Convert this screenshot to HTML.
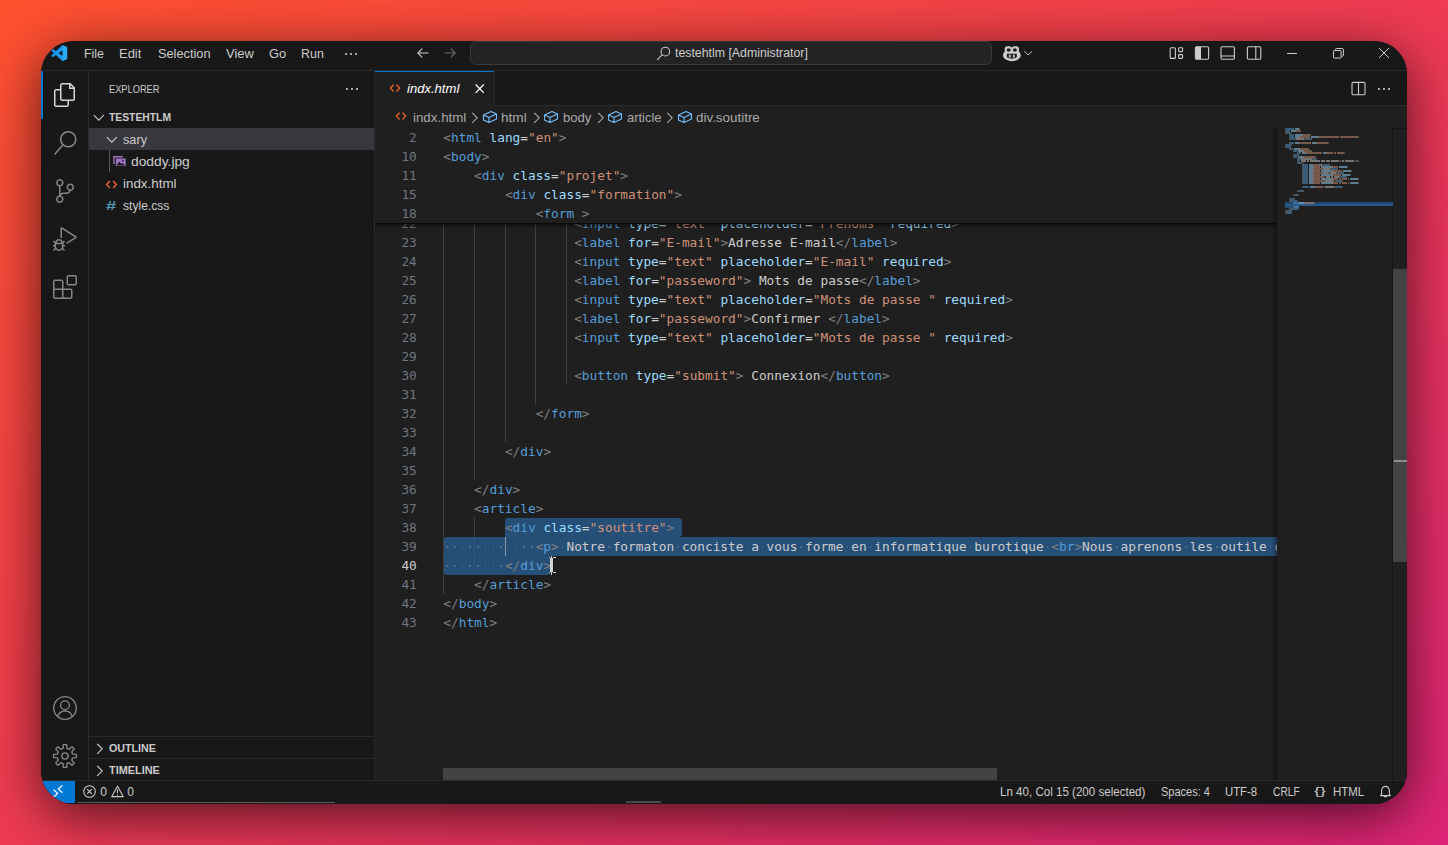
<!DOCTYPE html>
<html lang="en"><head><meta charset="utf-8"><title>indx.html - testehtlm - Visual Studio Code</title>
<style>

html,body{margin:0;padding:0;}
body{width:1448px;height:845px;overflow:hidden;position:relative;background:linear-gradient(to bottom right,#FF512F,#DD2476);font-family:"Liberation Sans",sans-serif;}
#shadow{position:absolute;left:41px;top:41px;width:1366px;height:763px;border-radius:33px;box-shadow:0 12px 54px rgba(0,0,0,0.66);}
#win{position:absolute;left:41px;top:41px;width:1366px;height:763px;border-radius:33px;overflow:hidden;background:#181818;}
#pg{position:absolute;left:-41px;top:-41px;width:1448px;height:845px;}
.b{position:absolute;}
.t{position:absolute;white-space:pre;transform-origin:0 50%;line-height:20px;height:20px;font-family:"Liberation Sans",sans-serif;}
.m{position:absolute;white-space:pre;line-height:19px;height:19px;font-family:"DejaVu Sans Mono","Liberation Mono",monospace;font-size:12.8px;letter-spacing:-0.009px;color:#cccccc;}
svg{position:absolute;overflow:visible;}
#mm i{position:absolute;height:1.2px;margin-top:0.4px;opacity:0.5;display:block}

</style></head><body>
<div id="shadow"></div>
<div id="win"><div id="pg">
<div class="b" style="left:41px;top:41px;width:1366px;height:763px;background:#181818;"></div><div class="b" style="left:41px;top:70px;width:1366px;height:1px;background:#2b2b2b;"></div><div class="b" style="left:88px;top:71px;width:1px;height:710px;background:#2b2b2b;"></div><div class="b" style="left:374px;top:71px;width:1px;height:710px;background:#2b2b2b;"></div><div class="b" style="left:375px;top:106px;width:1032px;height:675px;background:#1f1f1f;"></div><div class="b" style="left:375px;top:105px;width:1032px;height:1px;background:#2b2b2b;"></div><div class="b" style="left:41px;top:780px;width:1366px;height:1px;background:#2b2b2b;"></div><div class="b" style="left:41px;top:71px;width:2px;height:48px;background:#0078d4;"></div><div class="b" style="left:41px;top:781px;width:34px;height:22px;background:#0078d4;"></div><div class="b" style="left:41px;top:803px;width:1366px;height:1px;background:#141a1a;"></div><svg style="left:51px;top:45px" width="16.2" height="16.2" viewBox="0 0 100 100" >
<path d="M71 0 L74 31 L12 76 L1 66 Z" fill="#1b98ee"/>
<path d="M71 100 L74 69 L12 24 L1 34 Z" fill="#1b98ee"/>
<path d="M71 0 L100 13 V87 L71 100 Z" fill="#2bacfb"/>
</svg><svg style="left:343px;top:45.5px" width="16" height="16" viewBox="0 0 16 16" fill="#cccccc"><circle cx="3" cy="8" r="1.05"/><circle cx="8" cy="8" r="1.05"/><circle cx="13" cy="8" r="1.05"/></svg><svg style="left:415px;top:44.8px" width="16" height="16" viewBox="0 0 16 16" stroke="#cccccc"><path d="M13.5 8 H3 M7.2 3.6 L2.8 8 L7.2 12.4" fill="none" stroke-width="1.1" stroke-linecap="butt" stroke-linejoin="miter"/></svg><svg style="left:441.5px;top:44.8px" width="16" height="16" viewBox="0 0 16 16" stroke="#6b6b6b"><path d="M2.5 8 H13 M8.8 3.6 L13.2 8 L8.8 12.4" fill="none" stroke-width="1.1"/></svg><div class="b" style="left:470px;top:41px;width:520px;height:22px;background:#232323;border:1px solid #3a3a3a;border-radius:6px;box-sizing:content-box"></div><svg style="left:656px;top:45.5px" width="15" height="15" viewBox="0 0 16 16" stroke="#cccccc"><circle cx="10" cy="6" r="4.6" fill="none" stroke-width="1.15"/><path d="M6.7 9.3 L1.2 14.8" fill="none" stroke-width="1.15"/></svg><svg style="left:1003.2px;top:45.5px" width="17.7" height="15.3" viewBox="0 0 17.7 15.3" >
<path d="M1.9 5.6 C0.6 6.7 0 8 0 9.6 C0 12.2 3.6 15.2 8.85 15.2 C14.1 15.2 17.7 12.2 17.7 9.6 C17.7 8 17.1 6.7 15.8 5.6 Z" fill="#cccccc"/>
<rect x="1.7" y="0.2" width="7.3" height="7" rx="2.7" fill="#cccccc"/>
<rect x="8.7" y="0.2" width="7.3" height="7" rx="2.7" fill="#cccccc"/>
<rect x="3.9" y="2.5" width="3.6" height="3" rx="1.1" fill="#181818"/>
<rect x="10.1" y="2.5" width="3.6" height="3" rx="1.1" fill="#181818"/>
<path d="M3.9 7.8 H13.8 V10.4 C13.8 11.8 11.6 12.6 8.85 12.6 C6.1 12.600 3.9 11.800 3.900 10.400 Z" fill="#181818"/>
<rect x="5.9" y="8.600" width="1.8" height="3" fill="#cccccc"/>
<rect x="9.9" y="8.600" width="1.8" height="3" fill="#cccccc"/>
</svg><svg style="left:1024px;top:49px" width="8.4" height="8" viewBox="0 0 8.4 8" stroke="#cccccc"><path d="M0.3 2.1 L4.2 6 L8.1 2.1" fill="none" stroke-width="1"/></svg><svg style="left:1169px;top:45px" width="16" height="16" viewBox="0 0 16 16" stroke="#cccccc" stroke-width="1.1"><rect x="1.2" y="2.8" width="5.2" height="10.6" rx="1" fill="none"/><rect x="9.6" y="2.8" width="4" height="3.8" rx="0.8" fill="none"/><rect x="9.6" y="9.6" width="4" height="3.8" rx="0.8" fill="none"/></svg><svg style="left:1194px;top:45px" width="16" height="16" viewBox="0 0 16 16" stroke="#cccccc" stroke-width="1.1"><rect x="1.4" y="1.700" width="13.2" height="12.6" rx="1.4" fill="none"/><path d="M1.4 2.700 Q1.400 1.700 2.800 1.700 H7 V14.3 H2.800 Q1.400 14.300 1.400 13.300 Z" fill="#cccccc" stroke="none"/></svg><svg style="left:1220px;top:45px" width="16" height="16" viewBox="0 0 16 16" stroke="#cccccc" stroke-width="1.1"><rect x="1" y="1.700" width="13.400" height="12.600" rx="1.400" fill="none"/><path d="M1 11 H14.400" fill="none"/></svg><svg style="left:1246px;top:45px" width="16" height="16" viewBox="0 0 16 16" stroke="#cccccc" stroke-width="1.1"><rect x="1.4" y="1.700" width="13.400" height="12.600" rx="1.400" fill="none"/><path d="M9.800 1.700 V14.300" fill="none"/></svg><svg style="left:1287px;top:48px" width="10" height="10" viewBox="0 0 10 10" stroke="#cccccc" stroke-width="1"><path d="M0 5.5 H10" fill="none"/></svg><svg style="left:1333px;top:48px" width="11" height="11" viewBox="0 0 11 11" stroke="#cccccc" stroke-width="1"><rect x="0.5" y="2.5" width="7.6" height="7.6" rx="0.7" fill="none"/><path d="M2.6 2.4 V1.4 Q2.6 0.5 3.5 0.5 H9.2 Q10.4 0.5 10.4 1.7 V7.2 Q10.4 8.2 9.4 8.2 H8.3" fill="none"/></svg><svg style="left:1379px;top:48px" width="10" height="10" viewBox="0 0 10 10" stroke="#cccccc" stroke-width="1"><path d="M0 0 L10 10 M10 0 L0 10" fill="none"/></svg><div class="b" style="left:375px;top:71px;width:120px;height:35px;background:#1f1f1f;"></div><div class="b" style="left:375px;top:71px;width:120px;height:1px;background:#0078d4;"></div><div class="b" style="left:494px;top:71px;width:1px;height:34px;background:#2b2b2b;"></div><svg style="left:389.2px;top:82.8px" width="12.1" height="10.23" viewBox="0 0 13 11" ><path d="M4.9 1.9 L1.6 5.5 L4.9 9.1 M8.1 1.9 L11.4 5.5 L8.1 9.1" fill="none" stroke="#e5622d" stroke-width="1.5"/></svg><svg style="left:475.3px;top:84.3px" width="9.4" height="9.4" viewBox="0 0 10 10" stroke="#ffffff" stroke-width="1.35"><path d="M0.6 0.6 L9.4 9.4 M9.4 0.6 L0.6 9.4" fill="none"/></svg><svg style="left:1351px;top:81px" width="15" height="15" viewBox="0 0 15 15" stroke="#cccccc" stroke-width="1.1"><rect x="1" y="1.4" width="13" height="12.4" rx="1.4" fill="none"/><path d="M7.5 1.4 V13.8" fill="none"/></svg><svg style="left:1376px;top:81px" width="16" height="16" viewBox="0 0 16 16" fill="#cccccc"><circle cx="3" cy="8" r="1.05"/><circle cx="8" cy="8" r="1.05"/><circle cx="13" cy="8" r="1.05"/></svg><svg style="left:395.1px;top:110.7px" width="12.1" height="10.23" viewBox="0 0 13 11" ><path d="M4.9 1.9 L1.6 5.5 L4.9 9.1 M8.1 1.9 L11.4 5.5 L8.1 9.1" fill="none" stroke="#e5622d" stroke-width="1.5"/></svg><svg style="left:471px;top:111.5px" width="8" height="12" viewBox="0 0 8 12" stroke="#a9a9a9"><path d="M1.2 0.8 L6.2 5.8 L1.2 10.8" fill="none" stroke-width="1.1"/></svg><svg style="left:481.6px;top:109.3px" width="16" height="16" viewBox="0 0 16 16" ><path d="M9 2.5 L14.5 5.1 V10 L7 13.6 L1.500 11 V6 Z M1.500 6 L7 8.5 L14.500 5.100 M7 8.500 V13.600" fill="none" stroke="#75beff" stroke-width="1.1" stroke-linejoin="round"/></svg><svg style="left:532.6px;top:111.5px" width="8" height="12" viewBox="0 0 8 12" stroke="#a9a9a9"><path d="M1.2 0.8 L6.2 5.8 L1.2 10.8" fill="none" stroke-width="1.1"/></svg><svg style="left:543.1px;top:109.3px" width="16" height="16" viewBox="0 0 16 16" ><path d="M9 2.5 L14.5 5.1 V10 L7 13.6 L1.500 11 V6 Z M1.500 6 L7 8.5 L14.500 5.100 M7 8.500 V13.600" fill="none" stroke="#75beff" stroke-width="1.1" stroke-linejoin="round"/></svg><svg style="left:596.6px;top:111.5px" width="8" height="12" viewBox="0 0 8 12" stroke="#a9a9a9"><path d="M1.2 0.8 L6.2 5.8 L1.2 10.8" fill="none" stroke-width="1.1"/></svg><svg style="left:606.9px;top:109.3px" width="16" height="16" viewBox="0 0 16 16" ><path d="M9 2.5 L14.5 5.1 V10 L7 13.6 L1.500 11 V6 Z M1.500 6 L7 8.5 L14.500 5.100 M7 8.500 V13.600" fill="none" stroke="#75beff" stroke-width="1.1" stroke-linejoin="round"/></svg><svg style="left:666.4px;top:111.5px" width="8" height="12" viewBox="0 0 8 12" stroke="#a9a9a9"><path d="M1.2 0.8 L6.2 5.8 L1.2 10.8" fill="none" stroke-width="1.1"/></svg><svg style="left:676.5px;top:109.3px" width="16" height="16" viewBox="0 0 16 16" ><path d="M9 2.5 L14.5 5.1 V10 L7 13.6 L1.500 11 V6 Z M1.500 6 L7 8.5 L14.500 5.100 M7 8.500 V13.600" fill="none" stroke="#75beff" stroke-width="1.1" stroke-linejoin="round"/></svg><svg style="left:53px;top:83px" width="24" height="24" viewBox="0 0 24 24" fill="#d7d7d7"><path d="M17.5 0h-9L7 1.5V6H2.500L1 7.500v15.070L2.500 24h12.070L16 22.570V18h4.700l1.300-1.430V4.500L17.500 0zm0 2.120l2.380 2.380H17.500V2.120zm-3 20.380h-12v-15H7v9.070L8.500 18h6v4.500zm6-6h-12v-15H16V6h4.500v10.500z"/></svg><svg style="left:53px;top:131px" width="24" height="24" viewBox="0 0 24 24" fill="#868686"><path d="M15.250 0a8.250 8.250 0 0 0-6.180 13.720L1 22.880l1.120 1 8.050-9.120A8.251 8.251 0 1 0 15.250.010V0zm0 15a6.750 6.750 0 1 1 0-13.500 6.750 6.750 0 0 1 0 13.500z"/></svg><svg style="left:53px;top:179px" width="24" height="24" viewBox="0 0 24 24" fill="#868686"><path d="M21.007 8.222A3.738 3.738 0 0 0 15.045 5.200a3.737 3.737 0 0 0 1.156 6.583 2.988 2.988 0 0 1-2.668 1.670h-2.990a4.456 4.456 0 0 0-2.989 1.165V7.400a3.737 3.737 0 1 0-1.494 0v9.117a3.776 3.776 0 1 0 1.816.099 2.990 2.990 0 0 1 2.668-1.667h2.990a4.484 4.484 0 0 0 4.223-3.039 3.736 3.736 0 0 0 3.250-3.687zM4.565 3.738a2.242 2.242 0 1 1 4.484 0 2.242 2.242 0 0 1-4.484 0zm4.484 16.441a2.242 2.242 0 1 1-4.484 0 2.242 2.242 0 0 1 4.484 0zm8.221-9.715a2.242 2.242 0 1 1 0-4.485 2.242 2.242 0 0 1 0 4.485z"/></svg><svg style="left:53px;top:227px" width="24" height="24" viewBox="0 0 24 24" fill="#868686"><path d="M10.940 13.500l-1.320 1.320a3.730 3.730 0 0 0-7.240 0L1.060 13.500 0 14.560l1.720 1.720-.220.220V18H0v1.500h1.500v.080c.077.489.214.966.410 1.420L0 22.940 1.060 24l1.650-1.650A4.308 4.308 0 0 0 6 24a4.310 4.310 0 0 0 3.290-1.650L10.940 24 12 22.940 10.090 21c.198-.464.336-.951.410-1.450v-.100H12V18h-1.500v-1.500l-.220-.220L12 14.560l-1.060-1.060zM6 13.500a2.250 2.250 0 0 1 2.250 2.250h-4.500A2.250 2.250 0 0 1 6 13.500zm3 6a3.330 3.330 0 0 1-3 3 3.330 3.330 0 0 1-3-3v-2.250h6v2.250zm14.760-9.900v1.260L13.500 17.370V15.600l8.500-5.370L9 2v9.460a5.070 5.070 0 0 0-1.500-.720V.630L8.640 0l15.120 9.600z"/></svg><svg style="left:53px;top:275px" width="24" height="24" viewBox="0 0 24 24" fill="#868686"><path d="M13.500 1.500L15 0h7.500L24 1.500V9l-1.500 1.500H15L13.500 9V1.500zm1.500 0V9h7.500V1.500H15zM0 15V6l1.500-1.500H9L10.500 6v7.500H18l1.500 1.500v7.500L18 24H1.500L0 22.500V15zm9-1.500V6H1.500v7.500H9zM9 15H1.500v7.500H9V15zm1.500 7.500H18V15h-7.500v7.500z"/></svg><svg style="left:53px;top:696px" width="24" height="24" viewBox="0 0 24 24" stroke="#868686" stroke-width="1.3"><circle cx="12" cy="12" r="11.3" fill="none"/><circle cx="12" cy="9.3" r="4.4" fill="none"/><path d="M4.9 20.6 C5.8 16.9 8.5 15 12 15 C15.5 15 18.2 16.9 19.1 20.6" fill="none"/></svg><svg style="left:53px;top:744px" width="24" height="24" viewBox="0 0 24 24" stroke="#868686" stroke-width="1.4"><g transform="rotate(0 12 12)"><path d="M23.39 10.38 L23.39 13.62 L19.68 13.84 L18.74 16.13 L21.20 18.90 L18.90 21.20 L16.13 18.74 L13.84 19.68 L13.62 23.39 L10.38 23.39 L10.16 19.68 L7.87 18.74 L5.10 21.20 L2.80 18.90 L5.26 16.13 L4.32 13.84 L0.61 13.62 L0.61 10.38 L4.32 10.16 L5.26 7.87 L2.80 5.10 L5.10 2.80 L7.87 5.26 L10.16 4.32 L10.38 0.61 L13.62 0.61 L13.84 4.32 L16.13 5.26 L18.90 2.80 L21.20 5.10 L18.74 7.87 L19.68 10.16 Z" fill="none" stroke-linejoin="round"/><circle cx="12" cy="12" r="3.1" fill="none"/></g></svg><svg style="left:344px;top:81px" width="16" height="16" viewBox="0 0 16 16" fill="#cccccc"><circle cx="3" cy="8" r="1.05"/><circle cx="8" cy="8" r="1.05"/><circle cx="13" cy="8" r="1.05"/></svg><svg style="left:93px;top:113.5px" width="12" height="8" viewBox="0 0 12 8" stroke="#cccccc"><path d="M0.8 1.2 L5.8 6.2 L10.8 1.2" fill="none" stroke-width="1.1"/></svg><div class="b" style="left:89px;top:128px;width:285px;height:22px;background:#37373d;"></div><svg style="left:106px;top:135.5px" width="12" height="8" viewBox="0 0 12 8" stroke="#cccccc"><path d="M0.8 1.2 L5.8 6.2 L10.8 1.2" fill="none" stroke-width="1.1"/></svg><div class="b" style="left:109px;top:150px;width:1px;height:22px;background:#585858;"></div><svg style="left:112.6px;top:155.7px" width="13.2" height="10.4" viewBox="0 0 14 11" >
<path d="M1 8.4 V0.8 H10.4" fill="none" stroke="#a074c4" stroke-width="1.5"/>
<rect x="3" y="2.6" width="10.4" height="8" fill="#a074c4"/>
<path d="M3.6 10 L6.6 6.2 L8.8 8.6 L10 7.4 L12.8 10 Z" fill="#181818"/>
<circle cx="10.6" cy="4.8" r="0.9" fill="#181818"/>
</svg><svg style="left:105px;top:178.6px" width="13" height="11" viewBox="0 0 13 11" ><path d="M4.9 1.9 L1.6 5.5 L4.9 9.1 M8.1 1.9 L11.4 5.5 L8.1 9.1" fill="none" stroke="#e5622d" stroke-width="1.5"/></svg><div class="b" style="left:89px;top:736px;width:285px;height:1px;background:#2b2b2b;"></div><div class="b" style="left:89px;top:758px;width:285px;height:1px;background:#2b2b2b;"></div><svg style="left:95.8px;top:742.5px" width="8" height="12" viewBox="0 0 8 12" stroke="#cccccc"><path d="M1.2 0.8 L6.2 5.8 L1.2 10.8" fill="none" stroke-width="1.1"/></svg><svg style="left:95.8px;top:764.5px" width="8" height="12" viewBox="0 0 8 12" stroke="#cccccc"><path d="M1.2 0.8 L6.2 5.8 L1.2 10.8" fill="none" stroke-width="1.1"/></svg><svg style="left:53.2px;top:785px" width="10" height="12.4" viewBox="0 0 10 12.4" ><path d="M0.6 4.7 L4.6 8.4 L0.6 12.1 M9.4 0.4 L5.4 4.1 L9.4 7.8" fill="none" stroke="#ffffff" stroke-width="1.25"/></svg><svg style="left:83px;top:785px" width="13" height="13" viewBox="0 0 13 13" stroke="#cccccc" stroke-width="1.1"><circle cx="6.5" cy="6.5" r="5.8" fill="none"/><path d="M4.2 4.2 L8.8 8.8 M8.8 4.2 L4.2 8.8" fill="none"/></svg><svg style="left:110.5px;top:785px" width="13" height="13" viewBox="0 0 13 13" stroke="#cccccc" stroke-width="1.1"><path d="M6.5 1.2 L12.2 11.6 H0.8 Z" fill="none" stroke-linejoin="round"/><path d="M6.5 4.6 V8.2" fill="none"/><circle cx="6.5" cy="9.9" r="0.6" fill="#cccccc" stroke="none"/></svg><svg style="left:1379px;top:785px" width="13" height="14" viewBox="0 0 13 14" stroke="#cccccc" stroke-width="1.1"><path d="M1.6 10.6 H11.4 L10.4 9.2 V6 C10.4 3.200 8.800 1.400 6.500 1.400 C4.200 1.400 2.600 3.200 2.600 6 V9.200 Z" fill="none" stroke-linejoin="round"/><path d="M5.2 11 C5.2 12.200 7.800 12.200 7.800 11" fill="none"/></svg><div class="b" style="left:77px;top:802px;width:258px;height:1.4px;background:#5c5c5c;"></div><div class="b" style="left:626px;top:801.4px;width:35px;height:2px;background:#4a4a4a;"></div><div class="b" style="left:443px;top:214px;width:1px;height:380px;background:#404040;"></div><div class="b" style="left:474px;top:214px;width:1px;height:266px;background:#404040;"></div><div class="b" style="left:505px;top:214px;width:1px;height:228px;background:#404040;"></div><div class="b" style="left:535px;top:214px;width:1px;height:190px;background:#404040;"></div><div class="b" style="left:566px;top:214px;width:1px;height:171px;background:#404040;"></div><div class="b" style="left:474px;top:518px;width:1px;height:57px;background:#404040;"></div><div class="b" style="left:505px;top:518px;width:177px;height:19px;background:#264f78;border-radius:3px 3px 3px 0"></div><div class="b" style="left:444px;top:537px;width:833px;height:19px;background:#264f78;border-radius:3px 0 0 0"></div><div class="b" style="left:444px;top:556px;width:106.6px;height:19px;background:#264f78;border-radius:0 0 3px 3px"></div><div class="b" style="left:474px;top:518px;width:1px;height:57px;background:#38536f;"></div><div class="b" style="left:474px;top:518px;width:1px;height:19px;background:#404040;"></div><div class="b" style="left:505px;top:537px;width:1px;height:19px;background:#8a97a6;"></div><div class="b" style="left:538.76px;top:527px;width:1.5px;height:1.5px;background:#4b6a8c"></div><div class="b" style="left:446.40px;top:546px;width:1.5px;height:1.5px;background:#4b6a8c"></div><div class="b" style="left:454.10px;top:546px;width:1.5px;height:1.5px;background:#4b6a8c"></div><div class="b" style="left:461.79px;top:546px;width:1.5px;height:1.5px;background:#4b6a8c"></div><div class="b" style="left:469.49px;top:546px;width:1.5px;height:1.5px;background:#4b6a8c"></div><div class="b" style="left:477.19px;top:546px;width:1.5px;height:1.5px;background:#4b6a8c"></div><div class="b" style="left:484.88px;top:546px;width:1.5px;height:1.5px;background:#4b6a8c"></div><div class="b" style="left:492.58px;top:546px;width:1.5px;height:1.5px;background:#4b6a8c"></div><div class="b" style="left:500.28px;top:546px;width:1.5px;height:1.5px;background:#4b6a8c"></div><div class="b" style="left:507.97px;top:546px;width:1.5px;height:1.5px;background:#4b6a8c"></div><div class="b" style="left:515.67px;top:546px;width:1.5px;height:1.5px;background:#4b6a8c"></div><div class="b" style="left:523.37px;top:546px;width:1.5px;height:1.5px;background:#4b6a8c"></div><div class="b" style="left:531.07px;top:546px;width:1.5px;height:1.5px;background:#4b6a8c"></div><div class="b" style="left:561.85px;top:546px;width:1.5px;height:1.5px;background:#4b6a8c"></div><div class="b" style="left:608.04px;top:546px;width:1.5px;height:1.5px;background:#4b6a8c"></div><div class="b" style="left:677.31px;top:546px;width:1.5px;height:1.5px;background:#4b6a8c"></div><div class="b" style="left:746.58px;top:546px;width:1.5px;height:1.5px;background:#4b6a8c"></div><div class="b" style="left:761.98px;top:546px;width:1.5px;height:1.5px;background:#4b6a8c"></div><div class="b" style="left:800.46px;top:546px;width:1.5px;height:1.5px;background:#4b6a8c"></div><div class="b" style="left:846.64px;top:546px;width:1.5px;height:1.5px;background:#4b6a8c"></div><div class="b" style="left:869.73px;top:546px;width:1.5px;height:1.5px;background:#4b6a8c"></div><div class="b" style="left:969.79px;top:546px;width:1.5px;height:1.5px;background:#4b6a8c"></div><div class="b" style="left:1046.76px;top:546px;width:1.5px;height:1.5px;background:#4b6a8c"></div><div class="b" style="left:1116.04px;top:546px;width:1.5px;height:1.5px;background:#4b6a8c"></div><div class="b" style="left:1185.31px;top:546px;width:1.5px;height:1.5px;background:#4b6a8c"></div><div class="b" style="left:1216.10px;top:546px;width:1.5px;height:1.5px;background:#4b6a8c"></div><div class="b" style="left:1269.98px;top:546px;width:1.5px;height:1.5px;background:#4b6a8c"></div><div class="b" style="left:446.40px;top:565px;width:1.5px;height:1.5px;background:#4b6a8c"></div><div class="b" style="left:454.10px;top:565px;width:1.5px;height:1.5px;background:#4b6a8c"></div><div class="b" style="left:461.79px;top:565px;width:1.5px;height:1.5px;background:#4b6a8c"></div><div class="b" style="left:469.49px;top:565px;width:1.5px;height:1.5px;background:#4b6a8c"></div><div class="b" style="left:477.19px;top:565px;width:1.5px;height:1.5px;background:#4b6a8c"></div><div class="b" style="left:484.88px;top:565px;width:1.5px;height:1.5px;background:#4b6a8c"></div><div class="b" style="left:492.58px;top:565px;width:1.5px;height:1.5px;background:#4b6a8c"></div><div class="b" style="left:500.28px;top:565px;width:1.5px;height:1.5px;background:#4b6a8c"></div><span class="m" style="left:376px;top:214px;width:40.8px;text-align:right;color:#6e7681">22</span><span class="m" style="left:574.15px;top:214px"><span style="color:#808080">&lt;</span><span style="color:#569cd6">input</span><span style="color:#cccccc"> </span><span style="color:#9cdcfe">type</span><span style="color:#cccccc">=</span><span style="color:#ce9178">"text"</span><span style="color:#cccccc"> </span><span style="color:#9cdcfe">placeholder</span><span style="color:#cccccc">=</span><span style="color:#ce9178">"Prenoms"</span><span style="color:#cccccc"> </span><span style="color:#9cdcfe">required</span><span style="color:#808080">&gt;</span></span><span class="m" style="left:376px;top:233px;width:40.8px;text-align:right;color:#6e7681">23</span><span class="m" style="left:574.15px;top:233px"><span style="color:#808080">&lt;</span><span style="color:#569cd6">label</span><span style="color:#cccccc"> </span><span style="color:#9cdcfe">for</span><span style="color:#cccccc">=</span><span style="color:#ce9178">"E-mail"</span><span style="color:#808080">&gt;</span><span style="color:#cccccc">Adresse E-mail</span><span style="color:#808080">&lt;/</span><span style="color:#569cd6">label</span><span style="color:#808080">&gt;</span></span><span class="m" style="left:376px;top:252px;width:40.8px;text-align:right;color:#6e7681">24</span><span class="m" style="left:574.15px;top:252px"><span style="color:#808080">&lt;</span><span style="color:#569cd6">input</span><span style="color:#cccccc"> </span><span style="color:#9cdcfe">type</span><span style="color:#cccccc">=</span><span style="color:#ce9178">"text"</span><span style="color:#cccccc"> </span><span style="color:#9cdcfe">placeholder</span><span style="color:#cccccc">=</span><span style="color:#ce9178">"E-mail"</span><span style="color:#cccccc"> </span><span style="color:#9cdcfe">required</span><span style="color:#808080">&gt;</span></span><span class="m" style="left:376px;top:271px;width:40.8px;text-align:right;color:#6e7681">25</span><span class="m" style="left:574.15px;top:271px"><span style="color:#808080">&lt;</span><span style="color:#569cd6">label</span><span style="color:#cccccc"> </span><span style="color:#9cdcfe">for</span><span style="color:#cccccc">=</span><span style="color:#ce9178">"passeword"</span><span style="color:#808080">&gt;</span><span style="color:#cccccc"> Mots de passe</span><span style="color:#808080">&lt;/</span><span style="color:#569cd6">label</span><span style="color:#808080">&gt;</span></span><span class="m" style="left:376px;top:290px;width:40.8px;text-align:right;color:#6e7681">26</span><span class="m" style="left:574.15px;top:290px"><span style="color:#808080">&lt;</span><span style="color:#569cd6">input</span><span style="color:#cccccc"> </span><span style="color:#9cdcfe">type</span><span style="color:#cccccc">=</span><span style="color:#ce9178">"text"</span><span style="color:#cccccc"> </span><span style="color:#9cdcfe">placeholder</span><span style="color:#cccccc">=</span><span style="color:#ce9178">"Mots de passe "</span><span style="color:#cccccc"> </span><span style="color:#9cdcfe">required</span><span style="color:#808080">&gt;</span></span><span class="m" style="left:376px;top:309px;width:40.8px;text-align:right;color:#6e7681">27</span><span class="m" style="left:574.15px;top:309px"><span style="color:#808080">&lt;</span><span style="color:#569cd6">label</span><span style="color:#cccccc"> </span><span style="color:#9cdcfe">for</span><span style="color:#cccccc">=</span><span style="color:#ce9178">"passeword"</span><span style="color:#808080">&gt;</span><span style="color:#cccccc">Confirmer </span><span style="color:#808080">&lt;/</span><span style="color:#569cd6">label</span><span style="color:#808080">&gt;</span></span><span class="m" style="left:376px;top:328px;width:40.8px;text-align:right;color:#6e7681">28</span><span class="m" style="left:574.15px;top:328px"><span style="color:#808080">&lt;</span><span style="color:#569cd6">input</span><span style="color:#cccccc"> </span><span style="color:#9cdcfe">type</span><span style="color:#cccccc">=</span><span style="color:#ce9178">"text"</span><span style="color:#cccccc"> </span><span style="color:#9cdcfe">placeholder</span><span style="color:#cccccc">=</span><span style="color:#ce9178">"Mots de passe "</span><span style="color:#cccccc"> </span><span style="color:#9cdcfe">required</span><span style="color:#808080">&gt;</span></span><span class="m" style="left:376px;top:347px;width:40.8px;text-align:right;color:#6e7681">29</span><span class="m" style="left:443.30px;top:347px"></span><span class="m" style="left:376px;top:366px;width:40.8px;text-align:right;color:#6e7681">30</span><span class="m" style="left:574.15px;top:366px"><span style="color:#808080">&lt;</span><span style="color:#569cd6">button</span><span style="color:#cccccc"> </span><span style="color:#9cdcfe">type</span><span style="color:#cccccc">=</span><span style="color:#ce9178">"submit"</span><span style="color:#808080">&gt;</span><span style="color:#cccccc"> Connexion</span><span style="color:#808080">&lt;/</span><span style="color:#569cd6">button</span><span style="color:#808080">&gt;</span></span><span class="m" style="left:376px;top:385px;width:40.8px;text-align:right;color:#6e7681">31</span><span class="m" style="left:443.30px;top:385px"></span><span class="m" style="left:376px;top:404px;width:40.8px;text-align:right;color:#6e7681">32</span><span class="m" style="left:535.66px;top:404px"><span style="color:#808080">&lt;/</span><span style="color:#569cd6">form</span><span style="color:#808080">&gt;</span></span><span class="m" style="left:376px;top:423px;width:40.8px;text-align:right;color:#6e7681">33</span><span class="m" style="left:443.30px;top:423px"></span><span class="m" style="left:376px;top:442px;width:40.8px;text-align:right;color:#6e7681">34</span><span class="m" style="left:504.88px;top:442px"><span style="color:#808080">&lt;/</span><span style="color:#569cd6">div</span><span style="color:#808080">&gt;</span></span><span class="m" style="left:376px;top:461px;width:40.8px;text-align:right;color:#6e7681">35</span><span class="m" style="left:443.30px;top:461px"></span><span class="m" style="left:376px;top:480px;width:40.8px;text-align:right;color:#6e7681">36</span><span class="m" style="left:474.09px;top:480px"><span style="color:#808080">&lt;/</span><span style="color:#569cd6">div</span><span style="color:#808080">&gt;</span></span><span class="m" style="left:376px;top:499px;width:40.8px;text-align:right;color:#6e7681">37</span><span class="m" style="left:474.09px;top:499px"><span style="color:#808080">&lt;</span><span style="color:#569cd6">article</span><span style="color:#808080">&gt;</span></span><span class="m" style="left:376px;top:518px;width:40.8px;text-align:right;color:#6e7681">38</span><span class="m" style="left:504.88px;top:518px"><span style="color:#808080">&lt;</span><span style="color:#569cd6">div</span><span style="color:#cccccc"> </span><span style="color:#9cdcfe">class</span><span style="color:#cccccc">=</span><span style="color:#ce9178">"soutitre"</span><span style="color:#808080">&gt;</span></span><span class="m" style="left:376px;top:537px;width:40.8px;text-align:right;color:#6e7681">39</span><span class="m" style="left:535.66px;top:537px;width:741.34px;overflow:hidden"><span style="color:#808080">&lt;</span><span style="color:#569cd6">p</span><span style="color:#808080">&gt;</span><span style="color:#cccccc"> Notre formaton conciste a vous forme en informatique burotique </span><span style="color:#808080">&lt;</span><span style="color:#569cd6">br</span><span style="color:#808080">&gt;</span><span style="color:#cccccc">Nous aprenons les outile de base</span></span><span class="m" style="left:376px;top:556px;width:40.8px;text-align:right;color:#cccccc">40</span><span class="m" style="left:504.88px;top:556px"><span style="color:#808080">&lt;/</span><span style="color:#569cd6">div</span><span style="color:#808080">&gt;</span></span><span class="m" style="left:376px;top:575px;width:40.8px;text-align:right;color:#6e7681">41</span><span class="m" style="left:474.09px;top:575px"><span style="color:#808080">&lt;/</span><span style="color:#569cd6">article</span><span style="color:#808080">&gt;</span></span><span class="m" style="left:376px;top:594px;width:40.8px;text-align:right;color:#6e7681">42</span><span class="m" style="left:443.30px;top:594px"><span style="color:#808080">&lt;/</span><span style="color:#569cd6">body</span><span style="color:#808080">&gt;</span></span><span class="m" style="left:376px;top:613px;width:40.8px;text-align:right;color:#6e7681">43</span><span class="m" style="left:443.30px;top:613px"><span style="color:#808080">&lt;/</span><span style="color:#569cd6">html</span><span style="color:#808080">&gt;</span></span><div class="b" style="left:550.4px;top:558px;width:2.4px;height:14px;background:#d4d4d4;"></div><div class="b" style="left:550.8px;top:556px;width:1.6px;height:2px;background:#c8c8c8;"></div><div class="b" style="left:550.8px;top:572px;width:1.6px;height:2.6px;background:#c8c8c8;"></div><div class="b" style="left:553px;top:557px;width:3px;height:1px;background:#e8e8e8;"></div><div class="b" style="left:553px;top:572px;width:3px;height:1px;background:#e8e8e8;"></div><div class="b" style="left:549px;top:557px;width:1.4px;height:1px;background:#c9a57a;"></div><div class="b" style="left:549px;top:572px;width:1.4px;height:1px;background:#c9a57a;"></div><div class="b" style="left:552.8px;top:558px;width:1px;height:14px;background:#0d0d0d;"></div><div class="b" style="left:375px;top:128px;width:902px;height:95px;background:#1f1f1f;"></div><div class="b" style="left:375px;top:223px;width:902px;height:1px;background:#0a0a0a"></div><div class="b" style="left:375px;top:224px;width:902px;height:5px;background:linear-gradient(to bottom,rgba(0,0,0,0.45),rgba(0,0,0,0))"></div><span class="m" style="left:376px;top:128px;width:40.8px;text-align:right;color:#6e7681">2</span><span class="m" style="left:443.30px;top:128px"><span style="color:#808080">&lt;</span><span style="color:#569cd6">html</span><span style="color:#cccccc"> </span><span style="color:#9cdcfe">lang</span><span style="color:#cccccc">=</span><span style="color:#ce9178">"en"</span><span style="color:#808080">&gt;</span></span><span class="m" style="left:376px;top:147px;width:40.8px;text-align:right;color:#6e7681">10</span><span class="m" style="left:443.30px;top:147px"><span style="color:#808080">&lt;</span><span style="color:#569cd6">body</span><span style="color:#808080">&gt;</span></span><span class="m" style="left:376px;top:166px;width:40.8px;text-align:right;color:#6e7681">11</span><span class="m" style="left:474.09px;top:166px"><span style="color:#808080">&lt;</span><span style="color:#569cd6">div</span><span style="color:#cccccc"> </span><span style="color:#9cdcfe">class</span><span style="color:#cccccc">=</span><span style="color:#ce9178">"projet"</span><span style="color:#808080">&gt;</span></span><span class="m" style="left:376px;top:185px;width:40.8px;text-align:right;color:#6e7681">15</span><span class="m" style="left:504.88px;top:185px"><span style="color:#808080">&lt;</span><span style="color:#569cd6">div</span><span style="color:#cccccc"> </span><span style="color:#9cdcfe">class</span><span style="color:#cccccc">=</span><span style="color:#ce9178">"formation"</span><span style="color:#808080">&gt;</span></span><span class="m" style="left:376px;top:204px;width:40.8px;text-align:right;color:#6e7681">18</span><span class="m" style="left:535.66px;top:204px"><span style="color:#808080">&lt;</span><span style="color:#569cd6">form</span><span style="color:#cccccc"> </span><span style="color:#808080">&gt;</span></span><div class="b" style="left:1277px;top:128px;width:116px;height:652px;background:#1f1f1f;"></div><div class="b" style="left:1271px;top:128px;width:6px;height:652px;background:linear-gradient(to left,rgba(0,0,0,0.35),rgba(0,0,0,0))"></div><div class="b" style="left:1393px;top:128px;width:14px;height:652px;background:#1f1f1f;"></div><div class="b" style="left:1392px;top:128px;width:1px;height:652px;background:#151515;"></div><div class="b" style="left:1393px;top:128px;width:14px;height:1px;background:#151515;"></div><div class="b" style="left:1393px;top:269px;width:14px;height:293px;background:#434343;"></div><div class="b" style="left:1394px;top:460px;width:13px;height:2px;background:#8c8c8c;"></div><div class="b" style="left:443px;top:768px;width:554px;height:12px;background:#434343;"></div><div class="b" style="left:1285px;top:202px;width:108px;height:2px;background:#21446a"></div><div class="b" style="left:1285px;top:204px;width:108px;height:2px;background:#2a588a"></div><div class="b" style="left:1285px;top:206px;width:14px;height:2px;background:#264f78"></div><div id="mm"><i style="left:1285px;top:128px;width:1px;background:#808080"></i><i style="left:1286px;top:128px;width:8px;background:#569cd6"></i><i style="left:1295px;top:128px;width:4px;background:#9cdcfe"></i><i style="left:1299px;top:128px;width:1px;background:#808080"></i><i style="left:1285px;top:130px;width:1px;background:#808080"></i><i style="left:1286px;top:130px;width:4px;background:#569cd6"></i><i style="left:1291px;top:130px;width:4px;background:#9cdcfe"></i><i style="left:1295px;top:130px;width:1px;background:#cccccc"></i><i style="left:1296px;top:130px;width:4px;background:#ce9178"></i><i style="left:1300px;top:130px;width:1px;background:#808080"></i><i style="left:1285px;top:132px;width:1px;background:#808080"></i><i style="left:1286px;top:132px;width:4px;background:#569cd6"></i><i style="left:1290px;top:132px;width:1px;background:#808080"></i><i style="left:1289px;top:134px;width:1px;background:#808080"></i><i style="left:1290px;top:134px;width:4px;background:#569cd6"></i><i style="left:1295px;top:134px;width:7px;background:#9cdcfe"></i><i style="left:1302px;top:134px;width:1px;background:#cccccc"></i><i style="left:1303px;top:134px;width:7px;background:#ce9178"></i><i style="left:1310px;top:134px;width:1px;background:#808080"></i><i style="left:1289px;top:136px;width:1px;background:#808080"></i><i style="left:1290px;top:136px;width:4px;background:#569cd6"></i><i style="left:1295px;top:136px;width:4px;background:#9cdcfe"></i><i style="left:1299px;top:136px;width:1px;background:#cccccc"></i><i style="left:1300px;top:136px;width:10px;background:#ce9178"></i><i style="left:1311px;top:136px;width:7px;background:#9cdcfe"></i><i style="left:1318px;top:136px;width:1px;background:#cccccc"></i><i style="left:1319px;top:136px;width:20px;background:#ce9178"></i><i style="left:1340px;top:136px;width:18px;background:#ce9178"></i><i style="left:1358px;top:136px;width:1px;background:#808080"></i><i style="left:1289px;top:138px;width:1px;background:#808080"></i><i style="left:1290px;top:138px;width:5px;background:#569cd6"></i><i style="left:1295px;top:138px;width:1px;background:#808080"></i><i style="left:1296px;top:138px;width:8px;background:#cccccc"></i><i style="left:1304px;top:138px;width:2px;background:#808080"></i><i style="left:1306px;top:138px;width:5px;background:#569cd6"></i><i style="left:1311px;top:138px;width:1px;background:#808080"></i><i style="left:1289px;top:142px;width:1px;background:#808080"></i><i style="left:1290px;top:142px;width:4px;background:#569cd6"></i><i style="left:1295px;top:142px;width:3px;background:#9cdcfe"></i><i style="left:1298px;top:142px;width:1px;background:#cccccc"></i><i style="left:1299px;top:142px;width:12px;background:#ce9178"></i><i style="left:1312px;top:142px;width:4px;background:#9cdcfe"></i><i style="left:1316px;top:142px;width:1px;background:#cccccc"></i><i style="left:1317px;top:142px;width:11px;background:#ce9178"></i><i style="left:1328px;top:142px;width:1px;background:#808080"></i><i style="left:1285px;top:144px;width:2px;background:#808080"></i><i style="left:1287px;top:144px;width:4px;background:#569cd6"></i><i style="left:1291px;top:144px;width:1px;background:#808080"></i><i style="left:1285px;top:146px;width:1px;background:#808080"></i><i style="left:1286px;top:146px;width:4px;background:#569cd6"></i><i style="left:1290px;top:146px;width:1px;background:#808080"></i><i style="left:1289px;top:148px;width:1px;background:#808080"></i><i style="left:1290px;top:148px;width:3px;background:#569cd6"></i><i style="left:1294px;top:148px;width:5px;background:#9cdcfe"></i><i style="left:1299px;top:148px;width:1px;background:#cccccc"></i><i style="left:1300px;top:148px;width:8px;background:#ce9178"></i><i style="left:1308px;top:148px;width:1px;background:#808080"></i><i style="left:1293px;top:150px;width:1px;background:#808080"></i><i style="left:1294px;top:150px;width:3px;background:#569cd6"></i><i style="left:1298px;top:150px;width:5px;background:#9cdcfe"></i><i style="left:1303px;top:150px;width:1px;background:#cccccc"></i><i style="left:1304px;top:150px;width:7px;background:#ce9178"></i><i style="left:1311px;top:150px;width:1px;background:#808080"></i><i style="left:1297px;top:152px;width:1px;background:#808080"></i><i style="left:1298px;top:152px;width:3px;background:#569cd6"></i><i style="left:1302px;top:152px;width:3px;background:#9cdcfe"></i><i style="left:1305px;top:152px;width:1px;background:#cccccc"></i><i style="left:1306px;top:152px;width:16px;background:#ce9178"></i><i style="left:1323px;top:152px;width:3px;background:#9cdcfe"></i><i style="left:1326px;top:152px;width:1px;background:#cccccc"></i><i style="left:1327px;top:152px;width:6px;background:#ce9178"></i><i style="left:1334px;top:152px;width:2px;background:#ce9178"></i><i style="left:1337px;top:152px;width:7px;background:#ce9178"></i><i style="left:1344px;top:152px;width:1px;background:#808080"></i><i style="left:1293px;top:154px;width:2px;background:#808080"></i><i style="left:1295px;top:154px;width:3px;background:#569cd6"></i><i style="left:1298px;top:154px;width:1px;background:#808080"></i><i style="left:1293px;top:156px;width:1px;background:#808080"></i><i style="left:1294px;top:156px;width:3px;background:#569cd6"></i><i style="left:1298px;top:156px;width:5px;background:#9cdcfe"></i><i style="left:1303px;top:156px;width:1px;background:#cccccc"></i><i style="left:1304px;top:156px;width:11px;background:#ce9178"></i><i style="left:1315px;top:156px;width:1px;background:#808080"></i><i style="left:1297px;top:158px;width:1px;background:#808080"></i><i style="left:1298px;top:158px;width:2px;background:#569cd6"></i><i style="left:1300px;top:158px;width:1px;background:#808080"></i><i style="left:1301px;top:158px;width:11px;background:#cccccc"></i><i style="left:1312px;top:158px;width:2px;background:#808080"></i><i style="left:1314px;top:158px;width:2px;background:#569cd6"></i><i style="left:1316px;top:158px;width:1px;background:#808080"></i><i style="left:1297px;top:160px;width:1px;background:#808080"></i><i style="left:1298px;top:160px;width:1px;background:#569cd6"></i><i style="left:1299px;top:160px;width:1px;background:#808080"></i><i style="left:1301px;top:160px;width:5px;background:#cccccc"></i><i style="left:1307px;top:160px;width:2px;background:#cccccc"></i><i style="left:1310px;top:160px;width:10px;background:#cccccc"></i><i style="left:1321px;top:160px;width:4px;background:#cccccc"></i><i style="left:1326px;top:160px;width:4px;background:#cccccc"></i><i style="left:1331px;top:160px;width:8px;background:#cccccc"></i><i style="left:1340px;top:160px;width:1px;background:#cccccc"></i><i style="left:1342px;top:160px;width:2px;background:#cccccc"></i><i style="left:1345px;top:160px;width:9px;background:#cccccc"></i><i style="left:1355px;top:160px;width:2px;background:#808080"></i><i style="left:1357px;top:160px;width:1px;background:#569cd6"></i><i style="left:1358px;top:160px;width:1px;background:#808080"></i><i style="left:1297px;top:162px;width:1px;background:#808080"></i><i style="left:1298px;top:162px;width:4px;background:#569cd6"></i><i style="left:1303px;top:162px;width:1px;background:#808080"></i><i style="left:1302px;top:164px;width:1px;background:#808080"></i><i style="left:1303px;top:164px;width:5px;background:#569cd6"></i><i style="left:1309px;top:164px;width:3px;background:#9cdcfe"></i><i style="left:1312px;top:164px;width:1px;background:#cccccc"></i><i style="left:1313px;top:164px;width:5px;background:#ce9178"></i><i style="left:1318px;top:164px;width:1px;background:#808080"></i><i style="left:1319px;top:164px;width:3px;background:#cccccc"></i><i style="left:1322px;top:164px;width:2px;background:#808080"></i><i style="left:1324px;top:164px;width:5px;background:#569cd6"></i><i style="left:1329px;top:164px;width:1px;background:#808080"></i><i style="left:1302px;top:166px;width:1px;background:#808080"></i><i style="left:1303px;top:166px;width:5px;background:#569cd6"></i><i style="left:1309px;top:166px;width:4px;background:#9cdcfe"></i><i style="left:1313px;top:166px;width:1px;background:#cccccc"></i><i style="left:1314px;top:166px;width:6px;background:#ce9178"></i><i style="left:1321px;top:166px;width:11px;background:#9cdcfe"></i><i style="left:1332px;top:166px;width:1px;background:#cccccc"></i><i style="left:1333px;top:166px;width:5px;background:#ce9178"></i><i style="left:1339px;top:166px;width:8px;background:#9cdcfe"></i><i style="left:1347px;top:166px;width:1px;background:#808080"></i><i style="left:1302px;top:168px;width:1px;background:#808080"></i><i style="left:1303px;top:168px;width:5px;background:#569cd6"></i><i style="left:1309px;top:168px;width:3px;background:#9cdcfe"></i><i style="left:1312px;top:168px;width:1px;background:#cccccc"></i><i style="left:1313px;top:168px;width:9px;background:#ce9178"></i><i style="left:1322px;top:168px;width:1px;background:#808080"></i><i style="left:1323px;top:168px;width:7px;background:#cccccc"></i><i style="left:1330px;top:168px;width:2px;background:#808080"></i><i style="left:1332px;top:168px;width:5px;background:#569cd6"></i><i style="left:1337px;top:168px;width:1px;background:#808080"></i><i style="left:1302px;top:170px;width:1px;background:#808080"></i><i style="left:1303px;top:170px;width:5px;background:#569cd6"></i><i style="left:1309px;top:170px;width:4px;background:#9cdcfe"></i><i style="left:1313px;top:170px;width:1px;background:#cccccc"></i><i style="left:1314px;top:170px;width:6px;background:#ce9178"></i><i style="left:1321px;top:170px;width:11px;background:#9cdcfe"></i><i style="left:1332px;top:170px;width:1px;background:#cccccc"></i><i style="left:1333px;top:170px;width:9px;background:#ce9178"></i><i style="left:1343px;top:170px;width:8px;background:#9cdcfe"></i><i style="left:1351px;top:170px;width:1px;background:#808080"></i><i style="left:1302px;top:172px;width:1px;background:#808080"></i><i style="left:1303px;top:172px;width:5px;background:#569cd6"></i><i style="left:1309px;top:172px;width:3px;background:#9cdcfe"></i><i style="left:1312px;top:172px;width:1px;background:#cccccc"></i><i style="left:1313px;top:172px;width:8px;background:#ce9178"></i><i style="left:1321px;top:172px;width:1px;background:#808080"></i><i style="left:1322px;top:172px;width:7px;background:#cccccc"></i><i style="left:1330px;top:172px;width:6px;background:#cccccc"></i><i style="left:1336px;top:172px;width:2px;background:#808080"></i><i style="left:1338px;top:172px;width:5px;background:#569cd6"></i><i style="left:1343px;top:172px;width:1px;background:#808080"></i><i style="left:1302px;top:174px;width:1px;background:#808080"></i><i style="left:1303px;top:174px;width:5px;background:#569cd6"></i><i style="left:1309px;top:174px;width:4px;background:#9cdcfe"></i><i style="left:1313px;top:174px;width:1px;background:#cccccc"></i><i style="left:1314px;top:174px;width:6px;background:#ce9178"></i><i style="left:1321px;top:174px;width:11px;background:#9cdcfe"></i><i style="left:1332px;top:174px;width:1px;background:#cccccc"></i><i style="left:1333px;top:174px;width:8px;background:#ce9178"></i><i style="left:1342px;top:174px;width:8px;background:#9cdcfe"></i><i style="left:1350px;top:174px;width:1px;background:#808080"></i><i style="left:1302px;top:176px;width:1px;background:#808080"></i><i style="left:1303px;top:176px;width:5px;background:#569cd6"></i><i style="left:1309px;top:176px;width:3px;background:#9cdcfe"></i><i style="left:1312px;top:176px;width:1px;background:#cccccc"></i><i style="left:1313px;top:176px;width:11px;background:#ce9178"></i><i style="left:1324px;top:176px;width:1px;background:#808080"></i><i style="left:1326px;top:176px;width:4px;background:#cccccc"></i><i style="left:1331px;top:176px;width:2px;background:#cccccc"></i><i style="left:1334px;top:176px;width:5px;background:#cccccc"></i><i style="left:1339px;top:176px;width:2px;background:#808080"></i><i style="left:1341px;top:176px;width:5px;background:#569cd6"></i><i style="left:1346px;top:176px;width:1px;background:#808080"></i><i style="left:1302px;top:178px;width:1px;background:#808080"></i><i style="left:1303px;top:178px;width:5px;background:#569cd6"></i><i style="left:1309px;top:178px;width:4px;background:#9cdcfe"></i><i style="left:1313px;top:178px;width:1px;background:#cccccc"></i><i style="left:1314px;top:178px;width:6px;background:#ce9178"></i><i style="left:1321px;top:178px;width:11px;background:#9cdcfe"></i><i style="left:1332px;top:178px;width:1px;background:#cccccc"></i><i style="left:1333px;top:178px;width:5px;background:#ce9178"></i><i style="left:1339px;top:178px;width:2px;background:#ce9178"></i><i style="left:1342px;top:178px;width:5px;background:#ce9178"></i><i style="left:1348px;top:178px;width:1px;background:#ce9178"></i><i style="left:1350px;top:178px;width:8px;background:#9cdcfe"></i><i style="left:1358px;top:178px;width:1px;background:#808080"></i><i style="left:1302px;top:180px;width:1px;background:#808080"></i><i style="left:1303px;top:180px;width:5px;background:#569cd6"></i><i style="left:1309px;top:180px;width:3px;background:#9cdcfe"></i><i style="left:1312px;top:180px;width:1px;background:#cccccc"></i><i style="left:1313px;top:180px;width:11px;background:#ce9178"></i><i style="left:1324px;top:180px;width:1px;background:#808080"></i><i style="left:1325px;top:180px;width:9px;background:#cccccc"></i><i style="left:1335px;top:180px;width:2px;background:#808080"></i><i style="left:1337px;top:180px;width:5px;background:#569cd6"></i><i style="left:1342px;top:180px;width:1px;background:#808080"></i><i style="left:1302px;top:182px;width:1px;background:#808080"></i><i style="left:1303px;top:182px;width:5px;background:#569cd6"></i><i style="left:1309px;top:182px;width:4px;background:#9cdcfe"></i><i style="left:1313px;top:182px;width:1px;background:#cccccc"></i><i style="left:1314px;top:182px;width:6px;background:#ce9178"></i><i style="left:1321px;top:182px;width:11px;background:#9cdcfe"></i><i style="left:1332px;top:182px;width:1px;background:#cccccc"></i><i style="left:1333px;top:182px;width:5px;background:#ce9178"></i><i style="left:1339px;top:182px;width:2px;background:#ce9178"></i><i style="left:1342px;top:182px;width:5px;background:#ce9178"></i><i style="left:1348px;top:182px;width:1px;background:#ce9178"></i><i style="left:1350px;top:182px;width:8px;background:#9cdcfe"></i><i style="left:1358px;top:182px;width:1px;background:#808080"></i><i style="left:1302px;top:186px;width:1px;background:#808080"></i><i style="left:1303px;top:186px;width:6px;background:#569cd6"></i><i style="left:1310px;top:186px;width:4px;background:#9cdcfe"></i><i style="left:1314px;top:186px;width:1px;background:#cccccc"></i><i style="left:1315px;top:186px;width:8px;background:#ce9178"></i><i style="left:1323px;top:186px;width:1px;background:#808080"></i><i style="left:1325px;top:186px;width:9px;background:#cccccc"></i><i style="left:1334px;top:186px;width:2px;background:#808080"></i><i style="left:1336px;top:186px;width:6px;background:#569cd6"></i><i style="left:1342px;top:186px;width:1px;background:#808080"></i><i style="left:1297px;top:190px;width:2px;background:#808080"></i><i style="left:1299px;top:190px;width:4px;background:#569cd6"></i><i style="left:1303px;top:190px;width:1px;background:#808080"></i><i style="left:1293px;top:194px;width:2px;background:#808080"></i><i style="left:1295px;top:194px;width:3px;background:#569cd6"></i><i style="left:1298px;top:194px;width:1px;background:#808080"></i><i style="left:1289px;top:198px;width:2px;background:#808080"></i><i style="left:1291px;top:198px;width:3px;background:#569cd6"></i><i style="left:1294px;top:198px;width:1px;background:#808080"></i><i style="left:1289px;top:200px;width:1px;background:#808080"></i><i style="left:1290px;top:200px;width:7px;background:#569cd6"></i><i style="left:1297px;top:200px;width:1px;background:#808080"></i><i style="left:1293px;top:202px;width:1px;background:#808080"></i><i style="left:1294px;top:202px;width:3px;background:#569cd6"></i><i style="left:1298px;top:202px;width:5px;background:#9cdcfe"></i><i style="left:1303px;top:202px;width:1px;background:#cccccc"></i><i style="left:1304px;top:202px;width:10px;background:#ce9178"></i><i style="left:1314px;top:202px;width:1px;background:#808080"></i><i style="left:1293px;top:206px;width:2px;background:#808080"></i><i style="left:1295px;top:206px;width:3px;background:#569cd6"></i><i style="left:1298px;top:206px;width:1px;background:#808080"></i><i style="left:1289px;top:208px;width:2px;background:#808080"></i><i style="left:1291px;top:208px;width:7px;background:#569cd6"></i><i style="left:1298px;top:208px;width:1px;background:#808080"></i><i style="left:1285px;top:210px;width:2px;background:#808080"></i><i style="left:1287px;top:210px;width:4px;background:#569cd6"></i><i style="left:1291px;top:210px;width:1px;background:#808080"></i><i style="left:1285px;top:212px;width:2px;background:#808080"></i><i style="left:1287px;top:212px;width:4px;background:#569cd6"></i><i style="left:1291px;top:212px;width:1px;background:#808080"></i></div>
<span class="t" id="m_file" style="left:83.8px;top:43.50px;font-size:13px;color:#cccccc;font-weight:400;font-style:normal;transform:scaleX(0.9450)">File</span>
<span class="t" id="m_edit" style="left:118.6px;top:43.50px;font-size:13px;color:#cccccc;font-weight:400;font-style:normal;transform:scaleX(0.9953)">Edit</span>
<span class="t" id="m_sel" style="left:157.5px;top:43.50px;font-size:13px;color:#cccccc;font-weight:400;font-style:normal;transform:scaleX(0.9816)">Selection</span>
<span class="t" id="m_view" style="left:225.5px;top:43.50px;font-size:13px;color:#cccccc;font-weight:400;font-style:normal;transform:scaleX(0.9945)">View</span>
<span class="t" id="m_go" style="left:268.8px;top:43.50px;font-size:13px;color:#cccccc;font-weight:400;font-style:normal;transform:scaleX(0.9802)">Go</span>
<span class="t" id="m_run" style="left:300.9px;top:43.50px;font-size:13px;color:#cccccc;font-weight:400;font-style:normal;transform:scaleX(0.9556)">Run</span>
<span class="t" id="cc" style="left:674.9px;top:43.29px;font-size:12px;color:#cccccc;font-weight:400;font-style:normal;transform:scaleX(1.0265)">testehtlm [Administrator]</span>
<span class="t" id="tab" style="left:407.4px;top:79.00px;font-size:13px;color:#ffffff;font-weight:400;font-style:italic;transform:scaleX(1.0052)">indx.html</span>
<span class="t" id="bc1" style="left:413.3px;top:107.50px;font-size:13px;color:#a9a9a9;font-weight:400;font-style:normal;transform:scaleX(1.0244)">indx.html</span>
<span class="t" id="bc2" style="left:500.6px;top:107.50px;font-size:13px;color:#a9a9a9;font-weight:400;font-style:normal;transform:scaleX(1.0463)">html</span>
<span class="t" id="bc3" style="left:563px;top:107.50px;font-size:13px;color:#a9a9a9;font-weight:400;font-style:normal;transform:scaleX(1.0070)">body</span>
<span class="t" id="bc4" style="left:626.8px;top:107.50px;font-size:13px;color:#a9a9a9;font-weight:400;font-style:normal;transform:scaleX(0.9946)">article</span>
<span class="t" id="bc5" style="left:696.4px;top:107.50px;font-size:13px;color:#a9a9a9;font-weight:400;font-style:normal;transform:scaleX(1.0306)">div.soutitre</span>
<span class="t" id="exp" style="left:109.3px;top:78.99px;font-size:11px;color:#cccccc;font-weight:400;font-style:normal;transform:scaleX(0.8428)">EXPLORER</span>
<span class="t" id="root" style="left:109.3px;top:106.99px;font-size:11px;color:#cccccc;font-weight:700;font-style:normal;transform:scaleX(0.9394)">TESTEHTLM</span>
<span class="t" id="sary" style="left:123.2px;top:129.70px;font-size:13px;color:#cccccc;font-weight:400;font-style:normal;transform:scaleX(0.9771)">sary</span>
<span class="t" id="f1" style="left:131.1px;top:151.70px;font-size:13px;color:#cccccc;font-weight:400;font-style:normal;transform:scaleX(1.0610)">doddy.jpg</span>
<span class="t" id="f2" style="left:123.2px;top:173.70px;font-size:13px;color:#cccccc;font-weight:400;font-style:normal;transform:scaleX(1.0302)">indx.html</span>
<span class="t" id="hash" style="left:105.9px;top:195.70px;font-size:13px;color:#519aba;font-weight:700;font-style:normal;transform:scaleX(1.4099)">#</span>
<span class="t" id="f3" style="left:123.2px;top:195.70px;font-size:13px;color:#cccccc;font-weight:400;font-style:normal;transform:scaleX(0.9309)">style.css</span>
<span class="t" id="outl" style="left:109px;top:738.29px;font-size:11px;color:#cccccc;font-weight:700;font-style:normal;transform:scaleX(0.9693)">OUTLINE</span>
<span class="t" id="tl" style="left:109px;top:760.49px;font-size:11px;color:#cccccc;font-weight:700;font-style:normal;transform:scaleX(0.9914)">TIMELINE</span>
<span class="t" id="s0a" style="left:100.3px;top:781.54px;font-size:12px;color:#cccccc;font-weight:400;font-style:normal;transform:scaleX(1.0000)">0</span>
<span class="t" id="s0b" style="left:127.2px;top:781.54px;font-size:12px;color:#cccccc;font-weight:400;font-style:normal;transform:scaleX(1.0000)">0</span>
<span class="t" id="s1" style="left:999.8px;top:781.54px;font-size:12px;color:#cccccc;font-weight:400;font-style:normal;transform:scaleX(0.9644)">Ln 40, Col 15 (200 selected)</span>
<span class="t" id="s2" style="left:1160.5px;top:781.54px;font-size:12px;color:#cccccc;font-weight:400;font-style:normal;transform:scaleX(0.9180)">Spaces: 4</span>
<span class="t" id="s3" style="left:1225.3px;top:781.54px;font-size:12px;color:#cccccc;font-weight:400;font-style:normal;transform:scaleX(0.9441)">UTF-8</span>
<span class="t" id="s4" style="left:1272.8px;top:781.54px;font-size:12px;color:#cccccc;font-weight:400;font-style:normal;transform:scaleX(0.8518)">CRLF</span>
<span class="t" id="s5a" style="left:1313.6px;top:780.96px;font-size:10.5px;color:#cccccc;font-weight:400;font-style:normal;transform:scaleX(1.7067)">{</span>
<span class="t" id="s5b" style="left:1320.4px;top:780.96px;font-size:10.5px;color:#cccccc;font-weight:400;font-style:normal;transform:scaleX(1.7067)">}</span>
<span class="t" id="s6" style="left:1333.1px;top:781.54px;font-size:12px;color:#cccccc;font-weight:400;font-style:normal;transform:scaleX(0.9519)">HTML</span>
</div></div>
</body></html>
